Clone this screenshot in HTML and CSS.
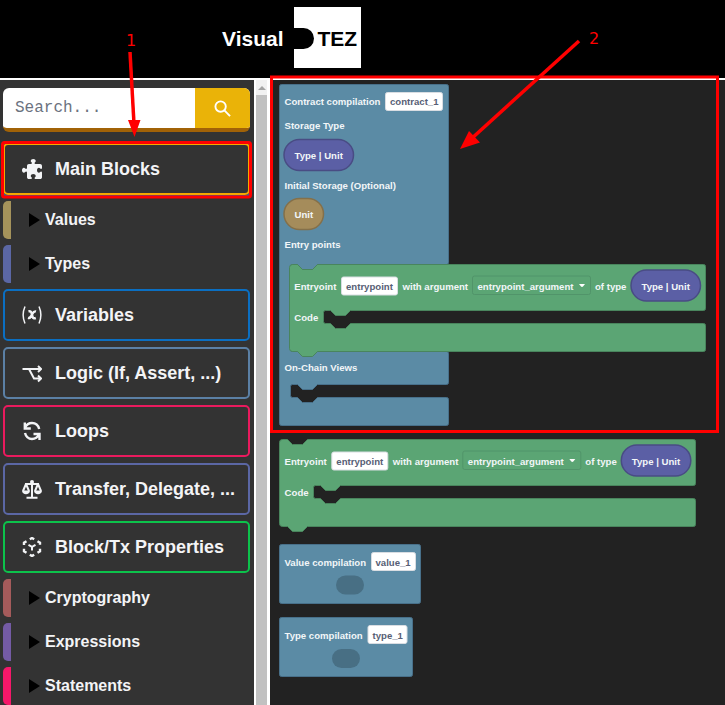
FILE: index.html
```html
<!DOCTYPE html>
<html lang="en">
<head>
<meta charset="utf-8">
<title>Visual TEZ</title>
<link rel="stylesheet" href="styles.css">
</head>
<body>
<header class="topbar">
  <span class="brand">Visual</span>
  <div class="logo"><span class="logo-tab"></span><span class="logo-text">TEZ</span></div>
</header>
<div class="main">
  <aside class="sidebar">
    <div class="search">
      <span class="search-input">Search...</span>
      <span class="search-btn">
        <svg class="search-icon" viewBox="0 0 18 18"><circle cx="7" cy="7" r="5.5"/><path d="M11 11l6 6"/></svg>
      </span>
    </div>
    <div class="cat cat-main">
      <svg class="cat-icon" viewBox="0 0 512 512"><path class="solid" transform="translate(512 0) scale(-1 1)" d="M192 104.800c0-9.200-5.800-17.300-13.200-22.800C167.200 73.300 160 61.300 160 48c0-26.500 28.700-48 64-48s64 21.500 64 48c0 13.300-7.200 25.300-18.800 34c-7.400 5.500-13.200 13.600-13.200 22.800c0 12.800 10.400 23.200 23.200 23.200H336c26.500 0 48 21.500 48 48v56.800c0 12.800 10.400 23.200 23.200 23.200c9.200 0 17.300-5.800 22.800-13.200c8.700-11.600 20.700-18.800 34-18.800c26.500 0 48 28.700 48 64s-21.500 64-48 64c-13.300 0-25.300-7.200-34-18.800c-5.500-7.400-13.600-13.200-22.800-13.200c-12.800 0-23.200 10.400-23.200 23.200V464c0 26.500-21.500 48-48 48H279.200c-12.800 0-23.200-10.400-23.200-23.200c0-9.200 5.800-17.300 13.200-22.800c11.600-8.700 18.800-20.700 18.800-34c0-26.500-28.700-48-64-48s-64 21.500-64 48c0 13.300 7.200 25.300 18.800 34c7.400 5.500 13.200 13.600 13.200 22.800c0 12.800-10.400 23.200-23.200 23.200H48c-26.500 0-48-21.500-48-48V343.200C0 330.400 10.400 320 23.200 320c9.200 0 17.300 5.800 22.800 13.200C54.700 344.800 66.700 352 80 352c26.500 0 48-28.700 48-64s-21.500-64-48-64c-13.300 0-25.300 7.200-34 18.800C40.500 250.200 32.400 256 23.200 256C10.400 256 0 245.600 0 232.800V176c0-26.500 21.500-48 48-48H168.800c12.800 0 23.200-10.400 23.200-23.200z"/></svg>
      <span>Main Blocks</span>
    </div>
    <div class="sub"><span class="bar bar-values"></span><span class="tri"></span><span>Values</span></div>
    <div class="sub"><span class="bar bar-types"></span><span class="tri"></span><span>Types</span></div>
    <div class="cat cat-vars">
      <svg class="cat-icon" viewBox="0 0 20 20"><path d="M3 1.500C.8 6.500.8 13.500 3 18.500M17 1.500c2.200 5 2.200 12 0 17"/><path class="heavy" d="M6.500 6.500c1.800-.6 2.700.2 3.100 1.700l.9 3.400c.4 1.500 1.400 2.100 3.300 1.400M14 6.500c-1.800-.5-2.900 1-3.700 2.500l-1 1.900c-.8 1.500-1.700 2.500-3.300 2"/></svg>
      <span>Variables</span>
    </div>
    <div class="cat cat-logic">
      <svg class="cat-icon" viewBox="0 0 20 20"><path class="thick" d="M.5 6H19M7 6l5 9.500h7M16 3l3.200 3L16 9M16 12.500l3.200 3-3.200 3"/></svg>
      <span>Logic (If, Assert, ...)</span>
    </div>
    <div class="cat cat-loops">
      <svg class="cat-icon" viewBox="0 0 20 20"><path class="heavy" d="M2.800 1.500v6h6M17.500 19v-6h-6M17.200 8C16.200 4.200 13.500 2 10 2 7 2 4.500 3.700 2.900 6.800M3 12c1 3.800 3.600 6 7 6 3 0 5.700-1.700 7.400-4.800"/></svg>
      <span>Loops</span>
    </div>
    <div class="cat cat-transfer">
      <svg class="cat-icon" viewBox="0 0 20 20"><circle class="solid" cx="10" cy="3" r="2"/><path class="thick" d="M10 2v16M3 5h14M4.500 18.800h11M4 5L1 12M4 5l3 7M16 5l-3 7M16 5l3 7"/><path class="solid" d="M0 11.500h8c0 5-8 5-8 0zM12 11.500h8c0 5-8 5-8 0z"/></svg>
      <span>Transfer, Delegate, ...</span>
    </div>
    <div class="cat cat-block">
      <svg class="cat-icon" viewBox="0 0 20 20"><path class="heavy" d="M7.800 2.300L10 1l2.200 1.300M15.500 4.200l2.500 1.500v2.100M18 11.800v2.500l-2.500 1.500M12.200 17.700L10 19l-2.200-1.300M4.500 15.800L2 14.300v-2.500M2 8V5.700l2.500-1.500"/><path class="thick" d="M6.500 7.800L10 9.800l3.500-2M10 9.800v3.700"/></svg>
      <span>Block/Tx Properties</span>
    </div>
    <div class="sub"><span class="bar bar-crypto"></span><span class="tri"></span><span>Cryptography</span></div>
    <div class="sub"><span class="bar bar-expr"></span><span class="tri"></span><span>Expressions</span></div>
    <div class="sub"><span class="bar bar-stmt"></span><span class="tri"></span><span>Statements</span></div>
  </aside>
  <div class="scrollbar"><span class="scroll-arrow"></span><span class="scroll-thumb"></span></div>
  <svg class="workspace" viewBox="270 80 455 625" aria-label="Block workspace">
    <!-- contract block -->
    <path class="blk-blue" transform="translate(279.500 84.500)" d="M2 0H167q2 0 2 2V178q0 2-2 2H38L33 185H23L18 180H13Q11 180 11 182V265Q11 267 13 267H167q2 0 2 2V298q0 2-2 2H38L33 305H23L18 300H13Q11 300 11 302V311Q11 313 13 313H18L23 318H33L38 313H167q2 0 2 2V339q0 2-2 2H2q-2 0-2-2V2Q0 0 2 0Z"/>
    <text class="t" x="284.500" y="105">Contract compilation</text>
    <rect class="field" x="385.500" y="92.500" width="57" height="18" rx="2"/>
    <text class="tf" x="390" y="105">contract_1</text>
    <text class="t" x="284.500" y="129">Storage Type</text>
    <rect class="pill-type" x="284" y="139.500" width="69.500" height="31" rx="15.500"/>
    <text class="t" x="294.500" y="159">Type | Unit</text>
    <text class="t" x="284.500" y="188.500">Initial Storage (Optional)</text>
    <rect class="pill-unit" x="284" y="198.500" width="39.500" height="31" rx="15.500"/>
    <text class="t" x="294.500" y="218">Unit</text>
    <text class="t" x="284.500" y="247.500">Entry points</text>
    <text class="t" x="284.500" y="371">On-Chain Views</text>

    <!-- nested entrypoint block -->
    <path class="blk-green" transform="translate(289.500 264.500)" d="M3 0H8L13 5H23L28 0H414q2 0 2 2V44q0 2-2 2H61L56 51H46L41 46H36Q34 46 34 48V57Q34 59 36 59H41L46 64H56L61 59H414q2 0 2 2V85q0 2-2 2H28L23 92H13L8 87H3Q0 87 0 84V3Q0 0 3 0Z"/>
    <text class="t" x="294.300" y="289.500">Entryoint</text>
    <rect class="field" x="341.500" y="277" width="56" height="18" rx="2"/>
    <text class="tf" x="346" y="289.500">entrypoint</text>
    <text class="t" x="402.500" y="289.500">with argument</text>
    <rect class="drop" x="472.500" y="276" width="118" height="18.500" rx="2"/>
    <text class="t" x="477.500" y="289.500">entrypoint_argument</text>
    <path class="caret" d="M579 284h6l-2 2.500q-1 .8-2 0z"/>
    <text class="t" x="595" y="289.500">of type</text>
    <rect class="pill-type" x="631" y="270" width="69.500" height="31" rx="15.500"/>
    <text class="t" x="641.500" y="289.500">Type | Unit</text>
    <text class="t" x="294.300" y="321">Code</text>

    <!-- standalone entrypoint block -->
    <path class="blk-green" transform="translate(279.500 439.500)" d="M3 0H8L13 5H23L28 0H414q2 0 2 2V44q0 2-2 2H61L56 51H46L41 46H36Q34 46 34 48V57Q34 59 36 59H41L46 64H56L61 59H414q2 0 2 2V85q0 2-2 2H28L23 92H13L8 87H3Q0 87 0 84V3Q0 0 3 0Z"/>
    <text class="t" x="284.600" y="464.500">Entryoint</text>
    <rect class="field" x="331.800" y="452" width="56" height="18" rx="2"/>
    <text class="tf" x="336.300" y="464.500">entrypoint</text>
    <text class="t" x="392.800" y="464.500">with argument</text>
    <rect class="drop" x="462.800" y="451" width="118" height="18.500" rx="2"/>
    <text class="t" x="467.800" y="464.500">entrypoint_argument</text>
    <path class="caret" d="M569.300 459h6l-2 2.500q-1 .8-2 0z"/>
    <text class="t" x="585.300" y="464.500">of type</text>
    <rect class="pill-type" x="621.300" y="445" width="69.500" height="31" rx="15.500"/>
    <text class="t" x="631.800" y="464.500">Type | Unit</text>
    <text class="t" x="284.600" y="496">Code</text>

    <!-- value compilation -->
    <rect class="blk-blue" x="279.500" y="544.500" width="141" height="59" rx="2"/>
    <text class="t" x="284.500" y="565.500">Value compilation</text>
    <rect class="field" x="371.500" y="552.500" width="44" height="18" rx="2"/>
    <text class="tf" x="375.500" y="565.500">value_1</text>
    <rect class="socket" x="336" y="575.500" width="28" height="19" rx="9.500"/>

    <!-- type compilation -->
    <rect class="blk-blue" x="279.500" y="617.500" width="133" height="59" rx="2"/>
    <text class="t" x="284.500" y="638.500">Type compilation</text>
    <rect class="field" x="368" y="625.500" width="39" height="18" rx="2"/>
    <text class="tf" x="372.500" y="638.500">type_1</text>
    <rect class="socket" x="332" y="649" width="28" height="19" rx="9.500"/>
  </svg>
</div>
<svg class="notes" viewBox="0 0 725 705">
  <rect class="note-box" x="2.500" y="142.500" width="248" height="54.500" rx="2"/>
  <rect class="note-box" x="271.500" y="77" width="446" height="354.500"/>
  <path class="note-line" d="M130 52l4 72"/>
  <path class="note-head" d="M128 120l6.500 17 6-17z"/>
  <path class="note-line" d="M579 41L470 140"/>
  <path class="note-head" d="M460 149l20-6.500-11-11.500z"/>
  <text class="note-num" x="126" y="46">1</text>
  <text class="note-num" x="589" y="44">2</text>
</svg>
</body>
</html>
```
FILE: styles.css
```css
* { box-sizing: border-box; }
html, body { margin: 0; height: 100%; overflow: hidden; }
body {
  position: relative;
  width: 725px;
  height: 705px;
  background: #000;
  font-family: "Liberation Sans", Arial, sans-serif;
}
.topbar {
  height: 80px;
  background: #000;
  border-bottom: 2px solid #fff;
  display: flex;
  align-items: flex-start;
  padding: 7px 0 0 222px;
  gap: 10.500px;
}
.brand {
  color: #fff;
  font-size: 21px;
  font-weight: 700;
  line-height: 64px;
}
.logo {
  position: relative;
  width: 67px;
  height: 61px;
  background: #fff;
  padding-left: 23.500px;
  color: #000;
  font-size: 21px;
  font-weight: 700;
  line-height: 63px;
}
.logo-tab {
  position: absolute;
  left: 0;
  top: 21px;
  width: 20px;
  height: 21px;
  background: #000;
  border-radius: 0 11px 11px 0;
}
.main { display: flex; height: 625px; }
.sidebar {
  width: 254px;
  height: 625px;
  overflow: hidden;
  background: #333;
  padding: 8px 4px 0 3px;
  display: flex;
  flex-direction: column;
  gap: 6px;
  flex: none;
}
.search {
  flex: none;
  height: 44px;
  margin-bottom: 5px;
  display: flex;
  border-radius: 6px;
  overflow: hidden;
  border-bottom: 4px solid #a16207;
  background: #fff;
}
.search-input {
  flex: 1;
  padding-left: 12px;
  font: 16px/40px "Liberation Mono", monospace;
  color: #6b7280;
}
.search-btn {
  width: 55px;
  background: #eab308;
  display: flex;
  align-items: center;
  justify-content: center;
}
.search-icon { width: 17px; height: 17px; fill: none; stroke: #fff; stroke-width: 2; }
.cat {
  flex: none;
  height: 52px;
  border: 2px solid #000;
  border-radius: 5px;
  display: flex;
  align-items: center;
  gap: 13px;
  padding-left: 17px;
  color: #f3f4f6;
  font-size: 18px;
  font-weight: 700;
  white-space: nowrap;
}
.cat-main { border-color: #f5a800; box-shadow: 0 0 0 2px #3b5b92; }
.cat-vars { border-color: #0b6fc2; }
.cat-logic { border-color: #5b80a5; }
.cat-loops { border-color: #ea1a5e; }
.cat-transfer { border-color: #5b67a5; }
.cat-block { border-color: #0cc24b; }
.cat-icon { width: 20px; height: 20px; flex: none; fill: none; stroke: #f3f4f6; stroke-width: 1.500; }
.cat-icon .solid { fill: #f3f4f6; stroke: none; }
.cat-icon .thick { stroke-width: 2; }
.cat-icon .heavy { stroke-width: 2.400; }
.sub {
  flex: none;
  height: 38px;
  display: flex;
  align-items: center;
  color: #f3f4f6;
  font-size: 16px;
  font-weight: 700;
}
.bar { width: 8px; height: 38px; border-radius: 5px 0 0 5px; flex: none; margin-right: 18px; }
.bar-values { background: #a5935b; }
.bar-types { background: #5b67a5; }
.bar-crypto { background: #a55b5b; }
.bar-expr { background: #745ba5; }
.bar-stmt { background: #f6186a; }
.tri {
  width: 0;
  height: 0;
  flex: none;
  margin: -1px 5px 0 0;
  border-style: solid;
  border-width: 7px 0 7px 11px;
  border-color: transparent transparent transparent #000;
}
.scrollbar {
  width: 16px;
  flex: none;
  background: #f1f1f1;
  border-left: 2px solid #fff;
  border-right: 3px solid #fff;
  display: flex;
  flex-direction: column;
  align-items: center;
}
.scroll-arrow {
  width: 0;
  height: 0;
  margin: 6px 0 5px;
  border-style: solid;
  border-width: 0 4px 4px;
  border-color: transparent transparent #a3a3a3;
}
.scroll-thumb { width: 100%; flex: 1; background: #c1c1c1; }
.workspace { flex: 1; height: 625px; display: block; background: #222; }
.blk-blue { fill: #5b8ba5; stroke: #48708a; stroke-width: 1; }
.blk-green { fill: #5ba574; stroke: #49855d; stroke-width: 1; }
.t { fill: #f2f6f8; font-size: 9.600px; font-weight: 700; font-family: "Liberation Sans", Arial, sans-serif; }
.tf { fill: #575e75; font-size: 9.600px; font-weight: 700; font-family: "Liberation Sans", Arial, sans-serif; }
.field { fill: #fff; stroke: #d9dde2; stroke-width: 1; }
.drop { fill: #5ba574; stroke: #51946a; stroke-width: 1; }
.caret { fill: #fff; }
.pill-type { fill: #5b5fa5; stroke: #494c84; stroke-width: 1.500; }
.pill-unit { fill: #a58c5b; stroke: #84704a; stroke-width: 1.500; }
.socket { fill: #486f84; }
.notes { position: absolute; left: 0; top: 0; width: 725px; height: 705px; pointer-events: none; }
.note-box { fill: none; stroke: #f00; stroke-width: 3; }
.note-line { fill: none; stroke: #f00; stroke-width: 3.500; }
.note-head { fill: #f00; }
.note-num { fill: #f00; font: 16px "DejaVu Sans", sans-serif; }
```
